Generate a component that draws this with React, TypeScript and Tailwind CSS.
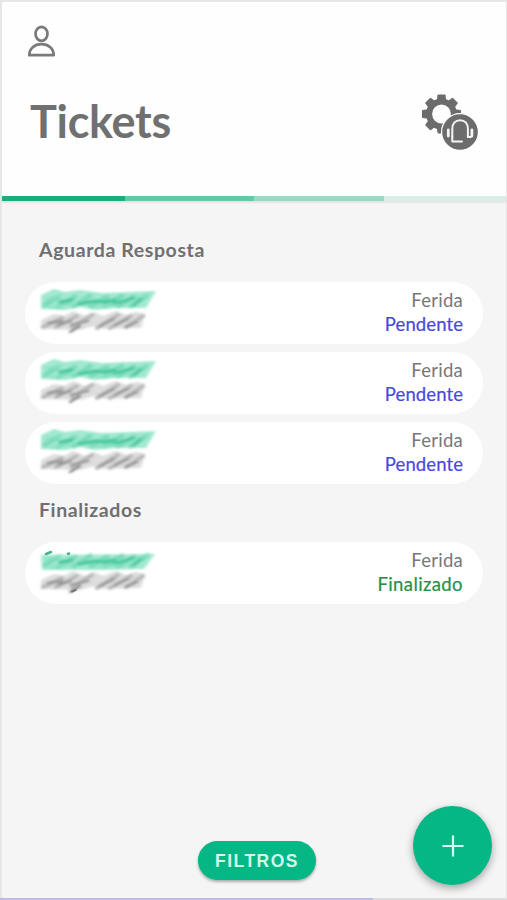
import { clsx } from "clsx";

type TicketStatus = "Pendente" | "Finalizado";

type Ticket = {
  id: number;
  category: string;
  status: TicketStatus;
};

const pendingTickets: Ticket[] = [
  { id: 1, category: "Ferida", status: "Pendente" },
  { id: 2, category: "Ferida", status: "Pendente" },
  { id: 3, category: "Ferida", status: "Pendente" },
];

const finishedTickets: Ticket[] = [{ id: 4, category: "Ferida", status: "Finalizado" }];

const UserIcon = () => (
  <svg className="h-8 w-7" viewBox="0 0 28 32" fill="none" stroke="#7a7a7a" strokeWidth="2.700">
    <ellipse cx="13.500" cy="8.800" rx="6" ry="7" />
    <path d="M1.300 30.200c0-6.500 5-11 12.200-11s12.200 4.500 12.200 11Z" strokeLinejoin="round" />
  </svg>
);

// Eight-toothed gear with the headset badge over its corner
const SupportIcon = () => (
  <svg className="h-[58px] w-[58px]" viewBox="0 0 58 58" fill="none">
    <g fill="#6c6c6c" transform="translate(19.500 21)">
      {[0, 45, 90, 135, 180, 225, 270, 315].map((angle) => (
        <path key={angle} d="M-4.800-13L-4-18.800Q-3.900-19.500-3.200-19.500H3.200Q3.900-19.500 4-18.800L4.800-13Z" transform={`rotate(${angle})`} />
      ))}
    </g>
    <circle cx="19.500" cy="21" r="12.400" stroke="#6c6c6c" strokeWidth="6" />
    <circle cx="38" cy="39" r="18.400" fill="#6c6c6c" stroke="#fff" strokeWidth="1.200" />
    <g stroke="#f4f4f4" strokeLinecap="round" strokeLinejoin="round">
      <path d="M30.300 44V36c0-5.600 3.200-8.800 7.800-8.800s7.800 3.200 7.800 8.800v8" strokeWidth="2" />
      <path d="M30.300 44v4.500H40" strokeWidth="2" />
      <path d="M26.300 37v6M49.900 37v6" strokeWidth="2.800" />
      <path d="M45.900 44h3" strokeWidth="1.800" />
    </g>
  </svg>
);

// Hand-brushed strokes that hide the customer name and reference
const RedactedLines = ({ finished }: { finished: boolean }) => (
  <svg className="-ml-1 h-[50px] w-[122px] shrink-0" viewBox="0 0 122 50" fill="none" aria-hidden="true">
    <defs>
      <filter id="brush" x="-10%" y="-20%" width="120%" height="140%">
        <feGaussianBlur stdDeviation="1.600 1.200" />
      </filter>
    </defs>
    <g filter="url(#brush)" strokeLinecap="round">
      <path
        d={finished ? "M3 7L117 6 106 21 66 22 4 22Z" : "M3 7L16 1 27 4 42 2 64 5 118 3 108 20 78 20 57 22 42 19 28 22 3 21Z"}
        fill="#a2e9d0"
      />
      <path d="M7 17L20 9M20 19L37 9M36 18L52 8M53 18L69 9M67 18L84 8M80 18L96 9M93 18L108 8" stroke="#7bdcbc" strokeWidth="5" />
      <path d="M22 14L34 12M41 16L57 13 66 14 77 12M76 16L95 10M96 17L103 11" stroke="#4cc9a1" strokeWidth="3.400" />
      <path d="M8 11L23 7M12 20L34 16M60 19L80 17M99 10L111 6" stroke="#8be1c5" strokeWidth="2" />
      <path d="M3 32L16 26 26 28 35 23 47 28 56 24 65 28 78 23 88 27 98 24 107 26 103 40 67 41 56 38 42 42 3 41Z" fill="#dedede" />
      <path d="M5 39L24 30M18 39L39 28M34 39L54 27M59 40L80 27M72 40L93 28M88 39L105 28" stroke="#bababa" strokeWidth="4.200" />
      <path d="M10 35L24 33M20 37L33 33M33 37L50 33M62 38L76 31M77 37L90 31M88 39L99 34" stroke="#9a9a9a" strokeWidth="2.800" />
      <path d="M32 44L42 38" stroke="#858585" strokeWidth="2.400" />
    </g>
    {finished ? (
      <>
        <path d="M8 6l5-2M30 6l1-.5" stroke="#43b48c" strokeWidth="2.600" strokeLinecap="round" />
        <path d="M34 43.500l3.500-1.500" stroke="#777777" strokeWidth="2.400" strokeLinecap="round" />
      </>
    ) : null}
  </svg>
);

const TicketCard = ({ ticket }: { ticket: Ticket }) => {
  const finished = ticket.status === "Finalizado";

  return (
    <li className="flex h-[62px] items-start justify-between rounded-[31px] bg-white pt-1.5 pl-[17px] pr-5">
      <RedactedLines finished={finished} />
      <div className="text-right text-[18.500px] leading-6">
        <p className="tracking-[0.25px] text-[#777777]">{ticket.category}</p>
        <p className={clsx("[-webkit-text-stroke:0.2px]", finished ? "tracking-[0.400px] text-[#219346]" : "tracking-[0.100px] text-[#4848df]")}>
          {ticket.status}
        </p>
      </div>
    </li>
  );
};

const TicketList = ({ title, tickets }: { title: string; tickets: Ticket[] }) => (
  <section>
    <h2 className="pl-3.5 text-[19.500px] font-bold leading-6 tracking-[0.600px] text-[#707070]">{title}</h2>
    <ul className="mt-5 flex flex-col gap-2">
      {tickets.map((ticket) => (
        <TicketCard key={ticket.id} ticket={ticket} />
      ))}
    </ul>
  </section>
);

export default function App() {
  return (
    <div className="flex h-[900px] w-[507px] flex-col border-t-2 border-r border-l-2 border-[#e6e6e6] bg-[#f5f5f5] font-['Lato',sans-serif]">
      <header className="h-[194px] shrink-0 bg-[#fefefe] pt-[23px] pr-[26px] pl-[26px]">
        <UserIcon />
        <div className="mt-9 flex items-start justify-between">
          <h1 className="-mt-0.5 pl-0.5 text-[45px] font-bold leading-[60px] tracking-[-0.300px] text-[#707070]">Tickets</h1>
          <SupportIcon />
        </div>
      </header>
      <div className="flex h-[5px] shrink-0 shadow-[0_2px_2px_#00000012]">
        <div className="w-[123px] bg-[#18ae7e]" />
        <div className="w-[129px] bg-[#65c9a9]" />
        <div className="w-[130px] bg-[#98dac4]" />
        <div className="flex-1 bg-[#d9eee6]" />
      </div>
      <main className="flex flex-1 flex-col gap-3.5 px-[23px] pt-[37px]">
        <TicketList title="Aguarda Resposta" tickets={pendingTickets} />
        <TicketList title="Finalizados" tickets={finishedTickets} />
      </main>
      <footer className="flex h-[92px] shrink-0 items-start justify-end pr-3.5">
        <button
          type="button"
          className="mt-[35px] mr-[97px] h-[39px] w-[118px] rounded-full bg-[#05b784] pt-px font-['Liberation_Sans',sans-serif] text-[17.500px] font-bold tracking-[1.500px] text-[#d2f9eb] shadow-[0_2px_3px_#0000004d]"
        >
          FILTROS
        </button>
        <button
          type="button"
          aria-label="+"
          className="flex h-[79px] w-[79px] items-center justify-center rounded-full bg-[#05b784] shadow-[0_3px_8px_#00000059]"
        >
          <svg className="h-[22px] w-[22px]" viewBox="0 0 22 22" stroke="#d9fff2" strokeWidth="2.200">
            <path d="M11 0.500v21M0.500 11h21" />
          </svg>
        </button>
      </footer>
      <div className="-mr-px -ml-0.5 flex h-0.5 shrink-0 bg-[#dddddd]">
        <div className="w-[373px] bg-[#bdbbe5]" />
      </div>
    </div>
  );
}
